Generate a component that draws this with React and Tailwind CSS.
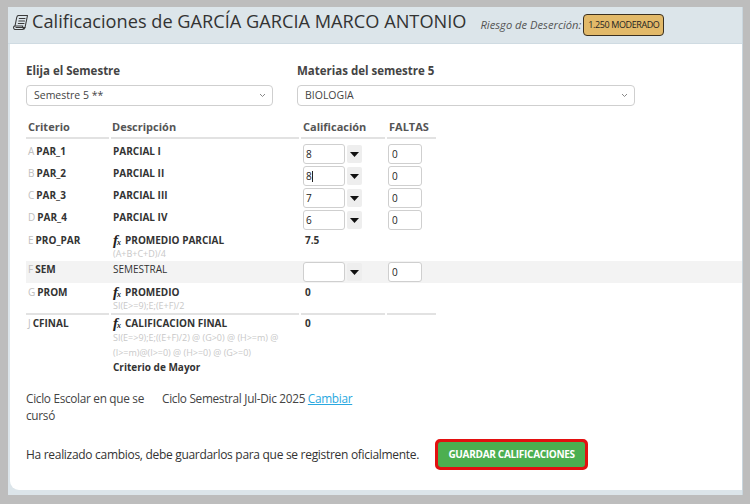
import React from "react";

const F = { fontFamily: "'Open Sans', 'Noto Sans', sans-serif" };

function ScrollIcon() {
  return (
    <svg width="17" height="17" viewBox="0 0 17 17" fill="none" stroke="#3a3a3a" strokeWidth="1.1" strokeLinejoin="round" strokeLinecap="round">
      <path d="M6.5 1.5 H15.5 L13 13.5 H4" />
      <path d="M6.5 1.5 C5.3 1.5 4.9 2.5 4.7 3.5 L3 12" />
      <path d="M4 15.5 C2.3 15.5 1.2 14.5 1.6 13 C1.8 12.3 2.4 12 3 12 H10.8 C10.3 13 10.6 14 11.4 14.2 M4 15.5 H10.5 C11.6 15.5 12.6 15 13 13.5" />
      <path d="M7.3 4.5 H13 M6.8 7 H12.5 M6.3 9.5 H12" />
    </svg>
  );
}

function Fx() {
  return (
    <span className="inline-flex items-end h-[14px] mr-[4px] text-[#222]" style={{ fontFamily: "'Liberation Serif', serif" }}>
      <span className="italic text-[15px] leading-[14px]">f</span>
      <span className="italic text-[8px] leading-[8px] -ml-[1px]">x</span>
    </span>
  );
}

function Select({ value, width }) {
  return (
    <div className={`${width} h-[21px] border border-[#cfcfcf] rounded-[4px] bg-white flex items-center justify-between pl-[7px] pr-[6px]`}>
      <span className="text-[10.5px] text-[#444]">{value}</span>
      <svg width="7" height="5" viewBox="0 0 7 5"><path d="M1 1 L3.5 3.5 L6 1" fill="none" stroke="#888" strokeWidth="1" /></svg>
    </div>
  );
}

function GradeInput({ value, cursor }) {
  return (
    <div className="flex items-center gap-[2px]">
      <div className="w-[42px] h-[20px] border border-[#cfcfcf] rounded-[3px] bg-white flex items-center pl-[2px] text-[10px] text-[#222]">
        {value}
        {cursor && <span className="w-[1px] h-[11px] bg-[#222]" />}
      </div>
      <div className="w-[15px] h-[18px] bg-[#eeeeee] rounded-[2px] flex items-center justify-center">
        <svg width="9" height="5" viewBox="0 0 9 5"><path d="M0 0 H9 L4.5 5 Z" fill="#111" /></svg>
      </div>
    </div>
  );
}

function FaltaInput() {
  return (
    <div className="w-[34px] h-[20px] border border-[#cfcfcf] rounded-[3px] bg-white flex items-center pl-[3px] text-[10px] text-[#222]">0</div>
  );
}

function Code({ letter, code }) {
  return (
    <div className="pl-[2px] text-[10px] leading-[14px]">
      <span className="text-[#c0c0c0] font-normal">{letter}</span>
      <span className="font-bold text-[#333] ml-[2px]">{code}</span>
    </div>
  );
}

const cols = "grid grid-cols-[83px_188px_84px_49px] gap-x-[2px]";

function InputRow({ letter, code, desc, value, cursor, gray }) {
  return (
    <div className={`${cols} h-[22px] ${gray ? "bg-[#f3f3f3]" : ""}`}>
      <div className="pt-[1px]"><Code letter={letter} code={code} /></div>
      <div className={`pt-[1px] pl-[2px] text-[10px] leading-[14px] text-[#333] ${gray ? "font-normal" : "font-bold"}`}>{desc}</div>
      <div className="pl-[2px] pt-[1px]"><GradeInput value={value} cursor={cursor} /></div>
      <div className="pl-[1px] pt-[1px]"><FaltaInput /></div>
    </div>
  );
}

export default function App() {
  return (
    <div className="w-[750px] h-[504px] bg-[#bdbdbd] overflow-hidden pt-[7px] pl-[8px]" style={F}>
      <div className="w-[735px] h-[488px] bg-[#dce5ea] border-r border-[#c9d6de] flex flex-col">
        {/* header */}
        <div className="h-[37px] flex items-center pl-[2px] border-b border-[#cfdbe2]">
          <div className="w-[20px] flex justify-center mb-[6px]"><ScrollIcon /></div>
          <span className="ml-[2px] mb-[7px] text-[18.2px] text-[#333]">Calificaciones de GARCÍA GARCIA MARCO ANTONIO</span>
          <span className="ml-[14px] text-[11.2px] italic text-[#555]">Riesgo de Deserción:</span>
          <span className="ml-[2px] h-[22px] px-[4px] flex items-center rounded-[4px] bg-[#e2b969] border border-[#3b3020] text-[9px] tracking-[-0.4px] text-[#222]">1.250 MODERADO</span>
        </div>
        {/* white card */}
        <div className="ml-[2px] flex-1 bg-white rounded-bl-[9px] mb-[5px] pl-[16px] pt-[19px] text-[#333]">
          <div className="flex">
            <div className="w-[271px]">
              <div className="text-[11.5px] font-bold text-[#444] h-[15px] leading-[15px]">Elija el Semestre</div>
              <div className="mt-[7px]"><Select value="Semestre 5 **" width="w-[247px]" /></div>
            </div>
            <div>
              <div className="text-[11.5px] font-bold text-[#444] h-[15px] leading-[15px]">Materias del semestre 5</div>
              <div className="mt-[7px]"><Select value="BIOLOGIA" width="w-[338px]" /></div>
            </div>
          </div>

          {/* table */}
          <div className="mt-[13px]">
            <div className={`${cols} h-[20px]`}>
              {["Criterio", "Descripción", "Calificación", "FALTAS"].map((h, i) => (
                <div key={h} className={`border-b-2 border-[#e2e2e2] text-[11px] font-bold text-[#555] leading-[16px] ${i === 1 ? "pl-[1px]" : "pl-[2px]"}`}>{h}</div>
              ))}
            </div>
            <div className="h-[4px]" />
            <InputRow letter="A" code="PAR_1" desc="PARCIAL I" value="8" />
            <InputRow letter="B" code="PAR_2" desc="PARCIAL II" value="8" cursor />
            <InputRow letter="C" code="PAR_3" desc="PARCIAL III" value="7" />
            <InputRow letter="D" code="PAR_4" desc="PARCIAL IV" value="6" />
            {/* PRO_PAR */}
            <div className={`${cols} h-[30px] pt-[2px]`}>
              <div><Code letter="E" code="PRO_PAR" /></div>
              <div className="pl-[2px]">
                <div className="flex items-center h-[14px] text-[10px] leading-[14px] font-bold text-[#333]"><Fx />PROMEDIO PARCIAL</div>
                <div className="text-[9px] leading-[14px] text-[#c8c8c8]">(A+B+C+D)/4</div>
              </div>
              <div className="pl-[4px] text-[10px] leading-[14px] font-bold">7.5</div>
              <div />
            </div>
            <InputRow letter="F" code="SEM" desc="SEMESTRAL" value="" gray />
            {/* PROM */}
            <div className={`${cols} h-[31px]`}>
              {[0, 1, 2, 3].map((i) => (
                <div key={i} className="border-b-2 border-[#e2e2e2] pt-[2px]">
                  {i === 0 && <Code letter="G" code="PROM" />}
                  {i === 1 && (
                    <div className="pl-[2px]">
                      <div className="flex items-center h-[14px] text-[10px] leading-[14px] font-bold text-[#333]"><Fx />PROMEDIO</div>
                      <div className="text-[9px] leading-[14px] text-[#c8c8c8]">SI(E&gt;=9);E;(E+F)/2</div>
                    </div>
                  )}
                  {i === 2 && <div className="pl-[4px] text-[10px] leading-[14px] font-bold">0</div>}
                </div>
              ))}
            </div>
            {/* CFINAL */}
            <div className={`${cols} pt-[2px]`}>
              <div><Code letter="J" code="CFINAL" /></div>
              <div className="pl-[2px]">
                <div className="flex items-center h-[14px] text-[10px] leading-[14px] font-bold text-[#333]"><Fx />CALIFICACION FINAL</div>
                <div className="text-[9px] leading-[15px] text-[#c8c8c8]">SI(E=&gt;9);E;((E+F)/2) @ (G&gt;0) @ (H&gt;=m) @<br />(I&gt;=m)@(I&gt;=0) @ (H&gt;=0) @ (G&gt;=0)</div>
                <div className="text-[10px] leading-[14px] font-bold text-[#333]">Criterio de Mayor</div>
              </div>
              <div className="pl-[4px] text-[10px] leading-[14px] font-bold">0</div>
              <div />
            </div>
          </div>

          {/* ciclo */}
          <div className="mt-[16px] flex text-[11.8px] leading-[17px] text-[#444] tracking-[-0.3px]">
            <div className="w-[136px]">Ciclo Escolar en que se<br />cursó</div>
            <div>Ciclo Semestral Jul-Dic 2025 <span className="text-[#29a8e0] underline">Cambiar</span></div>
          </div>

          {/* save */}
          <div className="mt-[15px] flex items-center">
            <span className="text-[12px] text-[#333] tracking-[-0.3px]">Ha realizado cambios, debe guardarlos para que se registren oficialmente.</span>
            <div className="ml-[16px] rounded-[5px] border-[3px] border-[#e31010] bg-[#e31010]">
              <div className="h-[25px] w-[147px] rounded-[3px] bg-[#4caf50] flex items-center justify-center text-white text-[10px] font-bold tracking-[-0.3px]">GUARDAR CALIFICACIONES</div>
            </div>
          </div>
        </div>
      </div>
    </div>
  );
}
